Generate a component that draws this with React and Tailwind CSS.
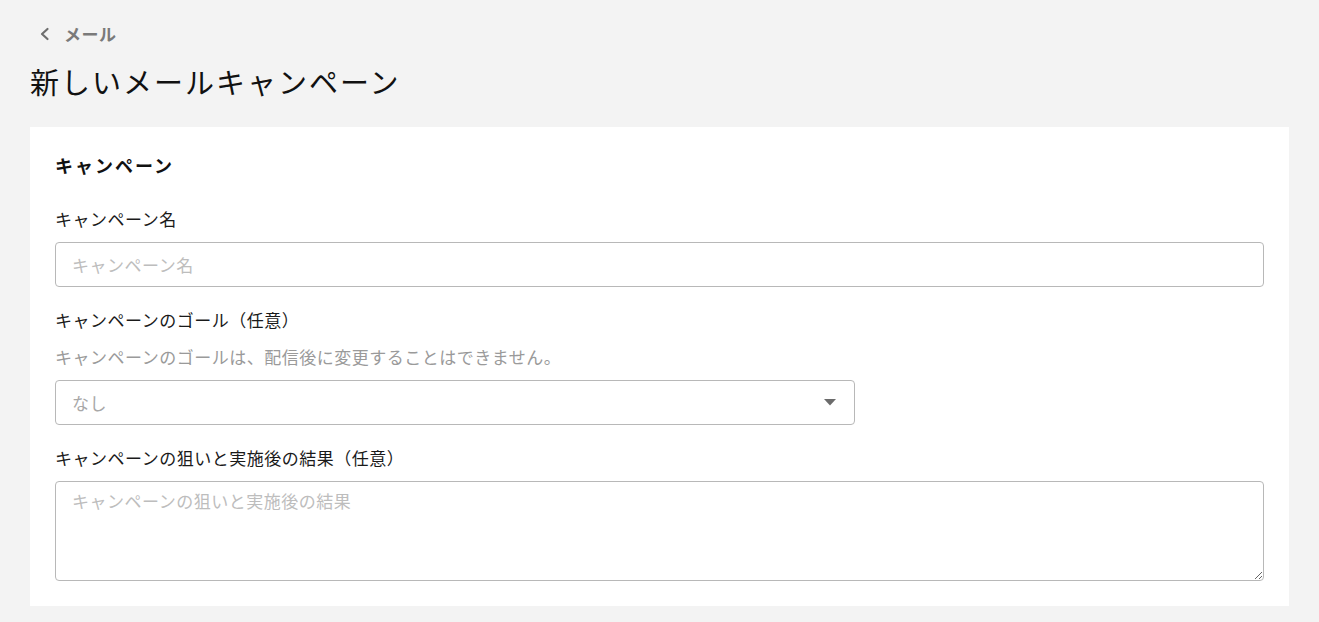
import React from 'react';

const font = { fontFamily: '"Noto Sans CJK JP", "Noto Sans", sans-serif' };

function Field({ label, children }) {
  return (
    <div className="flex flex-col">
      <label className="text-[17px] leading-[24px] tracking-[0.5px] text-[#1a1a1a]">{label}</label>
      {children}
    </div>
  );
}

export default function App() {
  return (
    <div className="min-h-[622px] bg-[#f3f3f3] px-[30px] pt-[22px] pb-4" style={font}>
      <a href="#" className="flex items-center gap-[12px] pl-[8px] text-[17px] leading-[24px] font-bold tracking-[0.5px] text-[#7a7a7a]">
        <svg width="14" height="16" viewBox="0 0 14 16" fill="none">
          <path d="M9.5 3 L4 8 L9.5 13" stroke="#6e6e6e" strokeWidth="2.2" strokeLinecap="round" strokeLinejoin="round" />
        </svg>
        メール
      </a>
      <h1 className="mt-[15px] text-[29px] leading-[40px] tracking-[2px] text-[#111]">新しいメールキャンペーン</h1>

      <div className="mt-[26px] bg-white px-[25px] pt-[24px] pb-[25px]">
        <h2 className="text-[18px] leading-[28px] font-bold tracking-[2px] text-[#111]">キャンペーン</h2>

        <div className="mt-[28px] flex flex-col gap-[21px]">
          <Field label="キャンペーン名">
            <input
              className="mt-[11px] h-[45px] w-full rounded-[4px] border border-[#b8b8b8] px-[16px] text-[17px] tracking-[0.5px] outline-none placeholder:text-[#bdbdbd]"
              placeholder="キャンペーン名"
            />
          </Field>

          <Field label="キャンペーンのゴール（任意）">
            <p className="mt-[13px] text-[17px] leading-[24px] tracking-[0.5px] text-[#9a9a9a]">キャンペーンのゴールは、配信後に変更することはできません。</p>
            <div className="mt-[11px] flex h-[45px] w-[800px] items-center justify-between rounded-[4px] border border-[#b8b8b8] pl-[16px] pr-[18px]">
              <span className="text-[17px] tracking-[0.5px] text-[#a8a8a8]">なし</span>
              <svg width="12" height="7" viewBox="0 0 12 7">
                <path d="M0 0 H12 L6 6.5 Z" fill="#6b6b6b" />
              </svg>
            </div>
          </Field>

          <Field label="キャンペーンの狙いと実施後の結果（任意）">
            <textarea
              className="mt-[11px] h-[100px] w-full rounded-[4px] border border-[#b8b8b8] px-[16px] py-[6px] text-[17px] leading-[26px] tracking-[0.5px] outline-none placeholder:text-[#bdbdbd]"
              placeholder="キャンペーンの狙いと実施後の結果"
            />
          </Field>
        </div>
      </div>
    </div>
  );
}
